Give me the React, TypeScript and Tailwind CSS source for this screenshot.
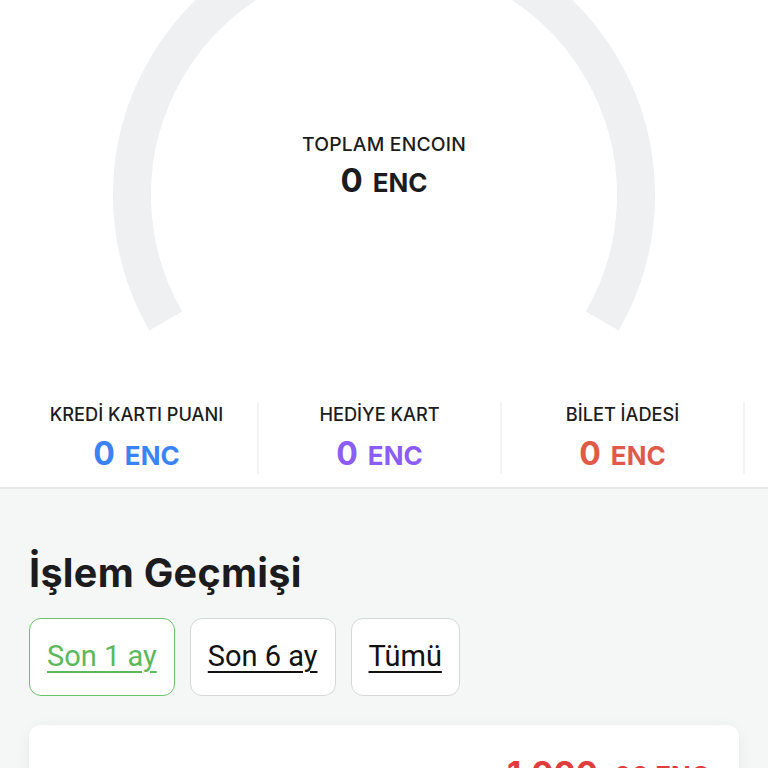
import React, { useState } from "react";

const stats = [
  { label: "KREDİ KARTI PUANI", color: "text-[#3b82f6]" },
  { label: "HEDİYE KART", color: "text-[#8b5cf6]" },
  { label: "BİLET İADESİ", color: "text-[#df5a48]" },
];

const ranges = ["Son 1 ay", "Son 6 ay", "Tümü"];

// gauge: center (384,195), r 252, from -120deg to +120deg
const Gauge: React.FC = () => (
  <svg
    className="absolute left-0 top-0"
    width="768"
    height="388"
    viewBox="0 0 768 388"
  >
    <path
      d="M165.76 321 A252 252 0 1 1 602.24 321"
      fill="none"
      stroke="#eef0f1"
      strokeWidth="38"
    />
  </svg>
);

export default function App() {
  const [range, setRange] = useState(0);

  return (
    <div className="min-h-screen bg-[#f5f6f6] font-['Inter',sans-serif] text-[#1c1c1e]">
      <div className="bg-white border-b-2 border-[#e6e8e8]">
        {/* Total */}
        <div className="relative h-[396px] overflow-hidden">
          <Gauge />
          <div className="relative flex flex-col items-center pt-[133px]">
            <span className="text-[19.3px] font-medium leading-[22px] tracking-[0.2px]">
              TOPLAM ENCOIN
            </span>
            <div className="mt-[7px] flex items-baseline gap-[10px] font-bold leading-[36px]">
              <span className="text-[33px]">0</span>
              <span className="text-[26px]">ENC</span>
            </div>
          </div>
        </div>

        {/* Breakdown */}
        <div className="flex px-4 pb-[13px]">
          {stats.map((s) => (
            <div
              key={s.label}
              className="w-[243px] shrink-0 border-r-2 border-[#f3f4f4] flex flex-col items-center pt-[2px] h-[72px] mt-[6px]"
            >
              <span className="text-[18.2px] font-medium leading-[20px]">
                {s.label}
              </span>
              <div
                className={`mt-[15px] flex items-baseline gap-[10px] font-bold leading-[30px] ${s.color}`}
              >
                <span className="text-[32px]">0</span>
                <span className="text-[26px]">ENC</span>
              </div>
            </div>
          ))}
        </div>
      </div>

      {/* History */}
      <div className="px-[29px] pt-[60px]">
        <h2 className="text-[39.5px] font-bold leading-[48px] tracking-[0.3px]">
          İşlem Geçmişi
        </h2>

        <div className="mt-[21px] flex gap-[15px]">
          {ranges.map((r, i) => (
            <button
              key={r}
              onClick={() => setRange(i)}
              className={`h-[78px] rounded-[12px] border bg-white px-[17px] font-['Roboto',sans-serif] text-[29px] underline underline-offset-[5px] decoration-[1.5px] ${
                range === i
                  ? "border-[#6cc26b] text-[#5cb85c]"
                  : "border-[#d6d8d8] text-[#111]"
              }`}
            >
              {r}
            </button>
          ))}
        </div>

        <div className="mt-[29px] h-[120px] rounded-[12px] bg-white shadow-[0_4px_16px_rgba(0,0,0,0.06)] flex justify-end pr-[29px] pt-[30px]">
          <div className="flex items-baseline gap-[8px] font-bold text-[#e03c3c] leading-[36px]">
            <span className="text-[33px]">1.000</span>
            <span className="text-[26px]">,00 ENC</span>
          </div>
        </div>
      </div>
    </div>
  );
}
